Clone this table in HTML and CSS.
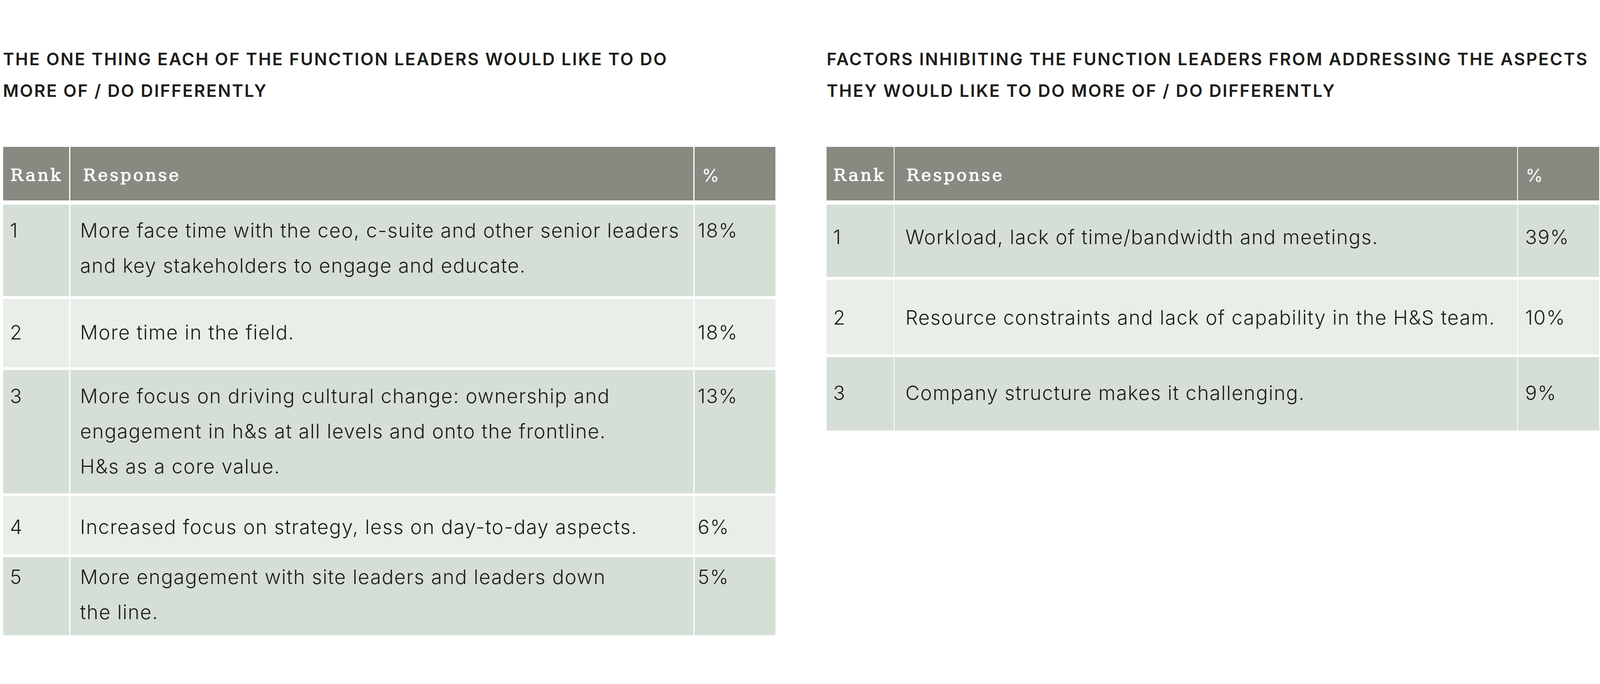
FILE: index.html
```html
<!DOCTYPE html>
<html lang="en">
<head>
<meta charset="utf-8">
<title>Function leaders</title>
<link rel="stylesheet" href="styles.css">
</head>
<body>
<div class="page">
  <section class="panel">
    <h2 class="title">THE ONE THING EACH OF THE FUNCTION LEADERS WOULD LIKE TO DO<br>MORE OF / DO DIFFERENTLY</h2>
    <div class="tbl">
      <div class="row head">
        <div class="c-rank">Rank</div>
        <div class="c-resp">Response</div>
        <div class="c-pct">%</div>
      </div>
      <div class="row dark l1">
        <div class="c-rank">1</div>
        <div class="c-resp">More face time with the ceo, c-suite and other senior leaders<br>and key stakeholders to engage and educate.</div>
        <div class="c-pct">18%</div>
      </div>
      <div class="row light l2">
        <div class="c-rank">2</div>
        <div class="c-resp">More time in the field.</div>
        <div class="c-pct">18%</div>
      </div>
      <div class="row dark l3">
        <div class="c-rank">3</div>
        <div class="c-resp">More focus on driving cultural change: ownership and<br>engagement in h&amp;s at all levels and onto the frontline.<br>H&amp;s as a core value.</div>
        <div class="c-pct">13%</div>
      </div>
      <div class="row light l4">
        <div class="c-rank">4</div>
        <div class="c-resp">Increased focus on strategy, less on day-to-day aspects.</div>
        <div class="c-pct">6%</div>
      </div>
      <div class="row dark l5">
        <div class="c-rank">5</div>
        <div class="c-resp">More engagement with site leaders and leaders down<br>the line.</div>
        <div class="c-pct">5%</div>
      </div>
    </div>
  </section>
  <section class="panel right">
    <h2 class="title">FACTORS INHIBITING THE FUNCTION LEADERS FROM ADDRESSING THE ASPECTS<br>THEY WOULD LIKE TO DO MORE OF / DO DIFFERENTLY</h2>
    <div class="tbl">
      <div class="row head">
        <div class="c-rank">Rank</div>
        <div class="c-resp">Response</div>
        <div class="c-pct">%</div>
      </div>
      <div class="row dark k1">
        <div class="c-rank">1</div>
        <div class="c-resp">Workload, lack of time/bandwidth and meetings.</div>
        <div class="c-pct">39%</div>
      </div>
      <div class="row light k2">
        <div class="c-rank">2</div>
        <div class="c-resp">Resource constraints and lack of capability in the H&amp;S team.</div>
        <div class="c-pct">10%</div>
      </div>
      <div class="row dark k3">
        <div class="c-rank">3</div>
        <div class="c-resp">Company structure makes it challenging.</div>
        <div class="c-pct">9%</div>
      </div>
    </div>
  </section>
</div>
</body>
</html>
```

FILE: styles.css
```css
/* The design is drawn on a 6000 x 1751 board; --x and --y are one board
   pixel across and down, so the whole board always fills the window. */
:root {
  --x: calc(100vw / 6000);
  --y: calc(100vh / 1751);
}

html, body {
  margin: 0;
  padding: 0;
  background: #ffffff;
}

body {
  height: 100vh;
  overflow: hidden;
  font-family: "Inter", "Liberation Sans", sans-serif;
  color: #1d1d1b;
}

.page {
  display: flex;
  gap: calc(192 * var(--x));
  padding: calc(111 * var(--y)) calc(3 * var(--x)) 0 calc(11 * var(--x));
}

.panel {
  flex: 1 1 0;
  min-width: 0;
}

.title {
  margin: 0 0 calc(103 * var(--y)) 0;
  font-family: "Inter", "Liberation Sans", sans-serif;
  font-weight: 600;
  font-size: calc(64 * var(--x));
  line-height: calc(81 * var(--y));
  letter-spacing: calc(4.4 * var(--x));
  color: #1d1d1b;
  white-space: nowrap;
}

.tbl {
  display: flex;
  flex-direction: column;
  gap: calc(7 * var(--y));
}

.row {
  display: grid;
  grid-template-columns: calc(249 * var(--x)) minmax(0, 1fr) calc(304 * var(--x));
  column-gap: calc(3.5 * var(--x));
  font-size: calc(74 * var(--x));
  line-height: calc(90 * var(--y));
  font-weight: 300;
  letter-spacing: calc(2.5 * var(--x));
  white-space: nowrap;
}

.right .row {
  grid-template-columns: calc(251.5 * var(--x)) minmax(0, 1fr) calc(304 * var(--x));
}

.row > div {
  box-sizing: border-box;
}

.c-rank { padding-left: calc(26 * var(--x)); }
.c-resp { padding-left: calc(37 * var(--x)); }
.c-pct  { padding-left: calc(12 * var(--x)); }

.right .c-rank { padding-left: calc(24 * var(--x)); }
.right .c-resp { padding-left: calc(40 * var(--x)); }
.right .c-pct  { padding-left: calc(26 * var(--x)); }

.dark > div  { background: #d5dfd6; }
.light > div { background: #e9eee9; }

.head {
  height: calc(137 * var(--y));
  margin-bottom: calc(4 * var(--y));
}

.head > div {
  background: #888a81;
  color: #ffffff;
  padding-top: calc(27 * var(--y));
  font-family: "DejaVu Serif", "Liberation Serif", serif;
  font-weight: 400;
  font-size: calc(64 * var(--x));
  line-height: calc(90 * var(--y));
  letter-spacing: calc(7 * var(--x));
  -webkit-text-stroke: calc(1.6 * var(--x)) #ffffff;
}

.head .c-rank { padding-left: calc(28 * var(--x)); }
.head .c-resp { padding-left: calc(48 * var(--x)); }
.head .c-pct {
  font-family: "Inter", "Liberation Sans", sans-serif;
  font-size: calc(66 * var(--x));
  letter-spacing: 0;
  -webkit-text-stroke: 0;
  padding-left: calc(28 * var(--x));
  padding-top: calc(28 * var(--y));
}
.right .head .c-rank { padding-left: calc(25 * var(--x)); }
.right .head .c-resp { padding-left: calc(44 * var(--x)); }
.right .head .c-pct  { padding-left: calc(28 * var(--x)); }

/* left table rows */
.l1 { height: calc(234 * var(--y)); }
.l1 > div { padding-top: calc(21 * var(--y)); }
.l2 { height: calc(175 * var(--y)); }
.l2 > div { padding-top: calc(41 * var(--y)); }
.l3 { height: calc(316 * var(--y)); }
.l3 > div { padding-top: calc(22 * var(--y)); }
.l4 { height: calc(149 * var(--y)); }
.l4 > div { padding-top: calc(34 * var(--y)); }
.l5 { height: calc(200 * var(--y)); }
.l5 > div { padding-top: calc(6 * var(--y)); }

/* right table rows */
.k1 { height: calc(185 * var(--y)); }
.k1 > div { padding-top: calc(38 * var(--y)); }
.k2 { height: calc(191 * var(--y)); }
.k2 > div { padding-top: calc(52 * var(--y)); }
.k3 { height: calc(188 * var(--y)); }
.k3 > div { padding-top: calc(47 * var(--y)); }
```
